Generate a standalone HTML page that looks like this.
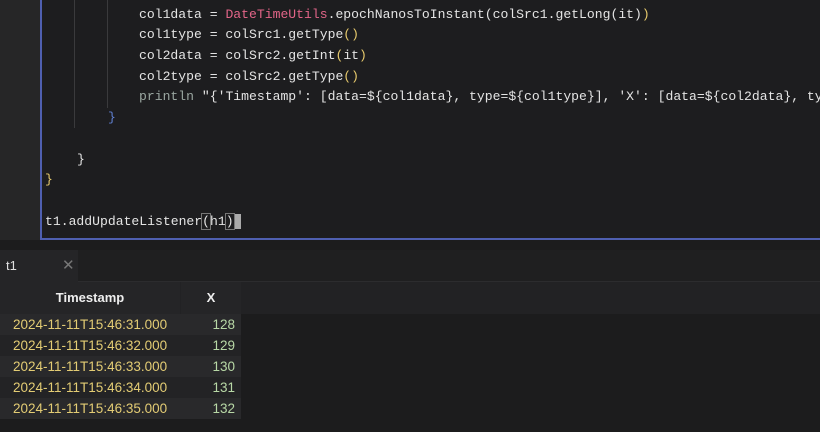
<!DOCTYPE html>
<html><head><style>
body{margin:0;width:820px;height:432px;overflow:hidden;background:#1c1c1d;position:relative;font-family:"Liberation Sans",sans-serif}
#gut{position:absolute;left:0;top:0;width:40px;height:240px;background:#262627}
#ed{position:absolute;left:40px;top:0;width:780px;height:238px;background:#1d1d1f;border-left:2px solid #4f5fb0;border-bottom:2px solid #4f5fb0;box-sizing:content-box}
.l{position:absolute;left:4px;font-family:"Liberation Mono",monospace;font-size:13.1px;color:#e4e4e4;white-space:pre;height:21px;line-height:21px}
.p{color:#e26588}.y{color:#e6c96c}.b{color:#5f7fd0}.g{color:#9aa6a0}
.gd{position:absolute;width:1px;background:#3a3a3c}
#tabbar{position:absolute;left:0;top:250px;width:820px;height:31px;background:#1f1f20;border-bottom:1px solid #2c2c2e}
#tab{position:absolute;left:0;top:250px;width:78px;height:32px;background:#252527;color:#e0e0e0;font-size:13px}
#tab span{position:absolute;left:6px;top:8px}
#tab i{position:absolute;left:62px;top:6px;font-style:normal;color:#777;font-size:15px}
#hdr{position:absolute;left:0;top:282px;width:820px;height:32px;background:#222224}
.h{position:absolute;top:282px;height:32px;line-height:32px;color:#eee;font-weight:bold;font-size:13px;text-align:center;background:#252527}
.r{position:absolute;left:0;width:241px;height:21px;line-height:21px;font-size:13.5px}
.r .t{position:absolute;left:13px;color:#e3cc74}.r .n{position:absolute;right:6px;color:#b8d8a6}
</style></head><body>
<div id="gut"></div>
<div id="ed">
<div class="gd" style="left:32px;top:0;height:128px"></div>
<div class="gd" style="left:65px;top:0;height:108px"></div>
<div class="l" style="top:4px;left:97px">col1data = <span class="p">DateTimeUtils</span>.epochNanosToInstant(colSrc1.getLong(it)<span class="y">)</span></div>
<div class="l" style="top:24px;left:97px">col1type = colSrc1.getType<span class="y">()</span></div>
<div class="l" style="top:45px;left:97px">col2data = colSrc2.getInt<span class="y">(</span>it<span class="y">)</span></div>
<div class="l" style="top:66px;left:97px">col2type = colSrc2.getType<span class="y">()</span></div>
<div class="l" style="top:86px;left:97px"><span class="g">println</span> "{'Timestamp': [data=${col1data}, type=${col1type}], 'X': [data=${col2data}, type</div>
<div class="l b" style="top:107px;left:66px">}</div>
<div class="l" style="top:149px;left:35px">}</div>
<div class="l y" style="top:169px;left:3px">}</div>
<div class="l" style="top:211px;left:3px">t1.addUpdateListener<span style="outline:1px solid #777">(</span>h1<span style="outline:1px solid #777">)</span><span style="background:#aaa"> </span></div>
</div>
<div id="tabbar"></div>
<div id="tab"><span>t1</span><i>✕</i></div>
<div id="hdr"></div>
<div class="h" style="left:0;width:180px">Timestamp</div>
<div class="h" style="left:181px;width:60px">X</div>
<div class="r" style="top:314px;background:#29292b"><span class="t">2024-11-11T15:46:31.000</span><span class="n">128</span></div>
<div class="r" style="top:335px;background:#232325"><span class="t">2024-11-11T15:46:32.000</span><span class="n">129</span></div>
<div class="r" style="top:356px;background:#29292b"><span class="t">2024-11-11T15:46:33.000</span><span class="n">130</span></div>
<div class="r" style="top:377px;background:#232325"><span class="t">2024-11-11T15:46:34.000</span><span class="n">131</span></div>
<div class="r" style="top:398px;background:#29292b"><span class="t">2024-11-11T15:46:35.000</span><span class="n">132</span></div>
</body></html>
